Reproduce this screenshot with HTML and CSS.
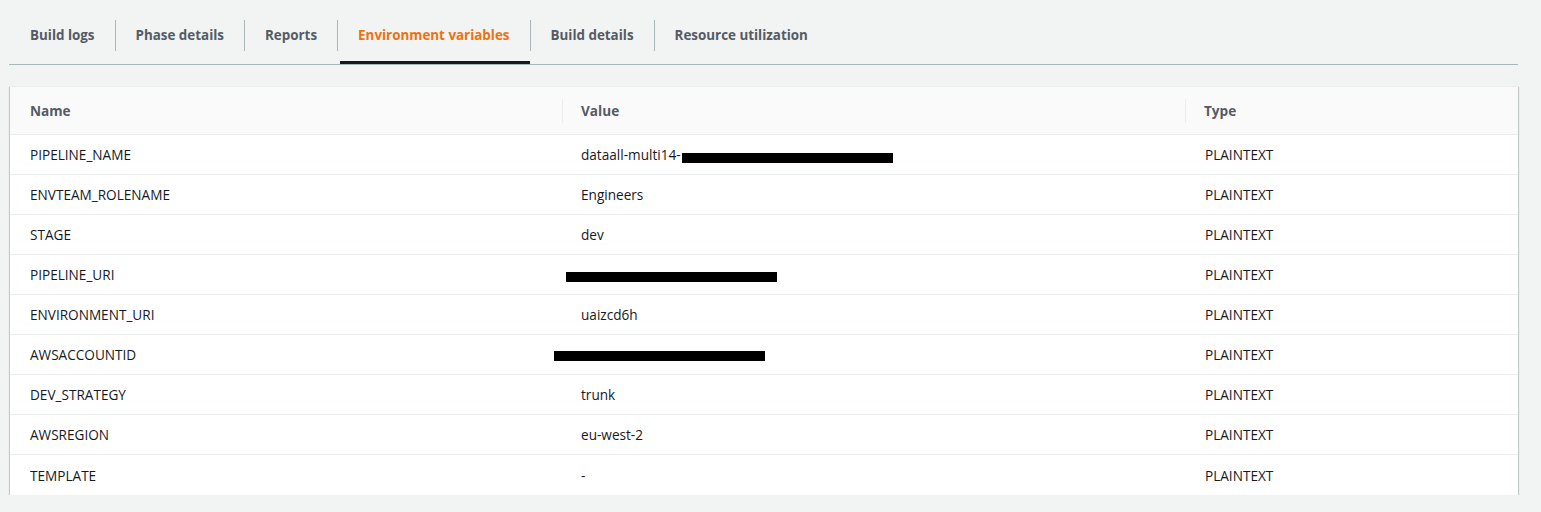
FILE: index.html
```html
<!DOCTYPE html>
<html>
<head>
<meta charset="utf-8">
<link rel="stylesheet" href="styles.css">
</head>
<body>
<div class="page">
  <nav class="tabs">
    <a class="tab">Build logs</a>
    <a class="tab">Phase details</a>
    <a class="tab">Reports</a>
    <a class="tab active">Environment variables</a>
    <a class="tab">Build details</a>
    <a class="tab">Resource utilization</a>
  </nav>
  <div class="panel">
    <table class="grid">
      <colgroup>
        <col class="c-name"><col class="c-value"><col class="c-type">
      </colgroup>
      <thead>
        <tr><th>Name</th><th class="sep">Value</th><th class="sep">Type</th></tr>
      </thead>
      <tbody>
        <tr><td>PIPELINE_NAME</td><td class="val">dataall-multi14-<span class="redact r1"></span></td><td>PLAINTEXT</td></tr>
        <tr><td>ENVTEAM_ROLENAME</td><td class="val">Engineers</td><td>PLAINTEXT</td></tr>
        <tr><td>STAGE</td><td class="val">dev</td><td>PLAINTEXT</td></tr>
        <tr><td>PIPELINE_URI</td><td class="val"><span class="redact r2"></span></td><td>PLAINTEXT</td></tr>
        <tr><td>ENVIRONMENT_URI</td><td class="val">uaizcd6h</td><td>PLAINTEXT</td></tr>
        <tr><td>AWSACCOUNTID</td><td class="val"><span class="redact r3"></span></td><td>PLAINTEXT</td></tr>
        <tr><td>DEV_STRATEGY</td><td class="val">trunk</td><td>PLAINTEXT</td></tr>
        <tr><td>AWSREGION</td><td class="val">eu-west-2</td><td>PLAINTEXT</td></tr>
        <tr><td>TEMPLATE</td><td class="val">-</td><td>PLAINTEXT</td></tr>
      </tbody>
    </table>
  </div>
</div>
</body>
</html>
```

FILE: styles.css
```css
html, body {
  margin: 0;
  padding: 0;
  background: #f2f3f3;
}
body {
  font-family: "Open Sans", "Liberation Sans", sans-serif;
  font-size: 13.6px;
  color: #16191f;
}
.page {
  padding: 8px 23px 0 10px;
}
.tabs {
  display: flex;
  height: 56px;
  margin-left: -1px;
  border-bottom: 1px solid #aab7b8;
}
.tab {
  position: relative;
  display: flex;
  align-items: center;
  padding: 0 20px 2px 21px;
  font-weight: 700;
  font-size: 13.4px;
  color: #545b64;
  white-space: nowrap;
}
.tab + .tab::before {
  content: "";
  position: absolute;
  left: 0;
  top: 12px;
  height: 31px;
  border-left: 1px solid #aab7b8;
}
.tab.active {
  color: #ec7211;
}
.tab.active::after {
  content: "";
  position: absolute;
  left: 3px;
  right: 0;
  bottom: 0;
  height: 3px;
  background: #16191f;
}
.panel {
  margin-top: 21px;
  background: #fff;
  box-shadow: 0 1px 1px 0 rgba(0, 28, 36, 0.3), 1px 1px 1px 0 rgba(0, 28, 36, 0.15), -1px 1px 1px 0 rgba(0, 28, 36, 0.15);
  border-top: 1px solid #eaeded;
}
.grid {
  width: 100%;
  border-collapse: collapse;
  table-layout: fixed;
}
.c-name { width: 552px; }
.c-value { width: 623px; }
.grid th {
  position: relative;
  height: 47px;
  padding: 0 20px;
  text-align: left;
  font-weight: 700;
  color: #545b64;
  background: #fafafa;
  border-bottom: 1px solid #eaeded;
}
.grid th.sep {
  padding-left: 19px;
}
.grid th.sep::before {
  content: "";
  position: absolute;
  left: 0;
  top: 12px;
  height: 24px;
  border-left: 1px solid #eaeded;
}
.grid td {
  position: relative;
  height: 39px;
  padding: 0 20px;
  border-bottom: 1px solid #eaeded;
  white-space: nowrap;
}
.grid td.val {
  padding-left: 19px;
}
.grid tbody tr:last-child td {
  border-bottom: none;
  height: 40px;
}
.redact {
  position: absolute;
  height: 10px;
  width: 211px;
  background: #000;
}
.r1 { left: 120px; top: 18px; }
.r2 { left: 4px; top: 17px; }
.r3 { left: -8px; top: 16px; }
```
